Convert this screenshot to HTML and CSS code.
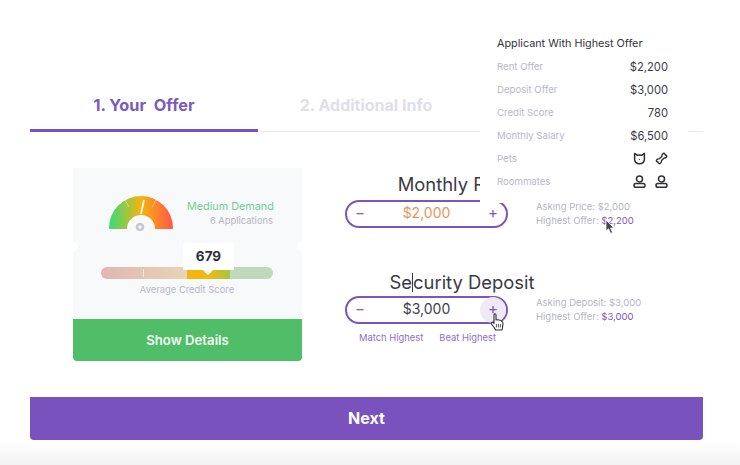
FILE: index.html
```html
<!DOCTYPE html>
<html lang="en">
<head>
  <meta charset="UTF-8" />
  <title>Your Offer</title>
  <link rel="stylesheet" href="styles.css">
</head>
<body>
  <div class="page">
    <div class="tabs">
      <div class="tab active">1. Your&nbsp; Offer</div>
      <div class="tab">2. Additional Info</div>
    </div>

    <div class="content">
      <div class="card">
        <div class="card-top">
          <div class="demand">
            <svg class="gauge" width="66" height="37" viewBox="0 0 66 37">
              <defs>
                <linearGradient id="gaugeFill" x1="0" y1="0" x2="1" y2="0">
                  <stop offset="0" stop-color="#35dc7c" />
                  <stop offset="0.5" stop-color="#f5b40f" />
                  <stop offset="1" stop-color="#ff5746" />
                </linearGradient>
              </defs>
              <path d="M1 34 A32 32 0 0 1 65 34 Q65 35 64 35 L47 35 A14 14 0 0 0 19 35 L2 35 Q1 35 1 34 Z" fill="url(#gaugeFill)" />
              <path d="M17 6 L21 13 M48 6 L44 13" stroke="#fff" stroke-opacity="0.45" stroke-width="1" />
              <path d="M33 20 L36 6" stroke="#fff" stroke-width="1.6" />
              <circle cx="32" cy="33" r="3" fill="none" stroke="#c6c6cc" stroke-width="2.6" />
            </svg>
            <div class="demand-text">
              <div class="demand-level">Medium Demand</div>
              <div class="demand-count">6 Applications</div>
            </div>
          </div>
          <div class="score">
            <div class="score-tip">679</div>
            <div class="score-bar">
              <div class="seg seg-low"></div>
              <div class="seg seg-mid"></div>
              <div class="seg seg-high"></div>
            </div>
            <div class="score-label">Average Credit Score</div>
          </div>
        </div>
        <div class="card-btn">Show Details</div>
      </div>

      <div class="fields">
        <div class="field">
          <div class="field-title rent">Monthly Rent</div>
          <div class="stepper">
            <span class="step">&minus;</span>
            <span class="amount orange">$2,000</span>
            <span class="step">+</span>
          </div>
          <div class="note">
            <div>Asking Price: $2,000</div>
            <div>Highest Offer: <span class="purple">$2,200</span></div>
          </div>
        </div>

        <div class="field">
          <div class="field-title">Se<span class="caret"></span>curity Deposit</div>
          <div class="stepper">
            <span class="step">&minus;</span>
            <span class="amount">$3,000</span>
            <span class="step hover">+</span>
          </div>
          <div class="note">
            <div>Asking Deposit: $3,000</div>
            <div>Highest Offer: <span class="purple">$3,000</span></div>
          </div>
          <div class="links">
            <span>Match Highest</span>
            <span>Beat Highest</span>
          </div>
        </div>
      </div>
    </div>

    <div class="next-btn">Next</div>
  </div>

  <div class="popover">
    <div class="popover-title">Applicant With Highest Offer</div>
    <div class="row"><span class="row-label">Rent Offer</span><span class="row-value">$2,200</span></div>
    <div class="row"><span class="row-label">Deposit Offer</span><span class="row-value">$3,000</span></div>
    <div class="row"><span class="row-label">Credit Score</span><span class="row-value">780</span></div>
    <div class="row"><span class="row-label">Monthly Salary</span><span class="row-value">$6,500</span></div>
    <div class="row">
      <span class="row-label">Pets</span>
      <span class="row-icons">
        <svg width="13" height="13" viewBox="0 0 13 13" fill="none" stroke="#2f2f38" stroke-width="1.5" stroke-linejoin="round">
          <path d="M1.6 1.4 L4 3.2 Q6.5 2.7 9 3.2 L11.4 1.4 L11.4 7.4 Q11 11.6 6.5 11.8 Q2 11.6 1.6 7.4 Z" />
          <circle cx="6.5" cy="7.6" r="0.7" fill="#2f2f38" stroke="none" />
        </svg>
        <svg width="13" height="13" viewBox="0 0 13 13" fill="none" stroke="#2f2f38" stroke-width="1.4" stroke-linejoin="round">
          <path d="M4.6 6.6 L6.8 4.4 Q6.8 3 7.6 2 Q9 0.6 9.8 2 Q10 3 11 3.2 Q12.6 4 11 5.4 Q10 6.2 8.8 6.2 L6.6 8.4 Q6.6 10 5.6 11 Q4.2 12.4 3.4 11 Q3.2 10 2.2 9.8 Q0.6 9 2 7.6 Q3 6.6 4.6 6.6 Z" />
        </svg>
      </span>
    </div>
    <div class="row">
      <span class="row-label">Roommates</span>
      <span class="row-icons">
        <svg width="13" height="13" viewBox="0 0 13 13" fill="none" stroke="#2f2f38" stroke-width="1.5">
          <circle cx="6.5" cy="3.9" r="3" />
          <rect x="1" y="8.6" width="11" height="3.6" rx="1.8" />
        </svg>
        <svg width="13" height="13" viewBox="0 0 13 13" fill="none" stroke="#2f2f38" stroke-width="1.5">
          <circle cx="6.5" cy="3.9" r="3" />
          <rect x="1" y="8.6" width="11" height="3.6" rx="1.8" />
        </svg>
      </span>
    </div>
  </div>

  <!-- curseurs -->
  <svg class="cursor arrow" width="12" height="16" viewBox="0 0 12 16">
    <path d="M1 1 L1 12 L3.6 9.8 L5.6 14.4 L7.6 13.4 L5.6 9 L9 9 Z" fill="#46464c" stroke="#fff" stroke-width="0.8" />
  </svg>
  <svg class="cursor hand" width="14" height="18" viewBox="0 0 14 18">
    <path d="M4 9 L4 2 Q4 0.8 5 0.8 Q6 0.8 6 2 L6 7 Q8 6.4 9 7 Q11 7 12 8.4 Q13 9 13 11 L12.4 15 L12 17 L5.4 17 L4.6 15 L1.4 11 Q0.6 9.6 2 9.2 Q3 9 4 10.4 Z" fill="#fff" stroke="#2c2c30" stroke-width="1.1" stroke-linejoin="round" />
    <path d="M6.4 11 L6.4 14.4 M8.4 11 L8.4 14.4 M10.4 11 L10.4 14.4" stroke="#2c2c30" stroke-width="0.8" />
  </svg>
</body>
</html>
```

FILE: styles.css
```css
html {
  height: 100%;
  background: linear-gradient(to bottom, #fff 442px, #f2f2f2 465px);
}

body {
  margin: 0;
  font-family: "Inter", "Liberation Sans", sans-serif;
  color: #33333c;
  overflow: hidden;
  height: 465px;
  position: relative;
}

.page {
  width: 673px;
  padding: 93px 37px 0 30px;
}

.tabs {
  display: flex;
  border-bottom: 1px solid #e9e9ef;
  height: 38px;
}

.tab {
  width: 216px;
  height: 25px;
  line-height: 25px;
  text-align: center;
  font-size: 16px;
  font-weight: 700;
  color: #dfdfe9;
}

.tab.active {
  width: 228px;
  height: 36px;
  font-size: 16.3px;
  color: #7b59bd;
  border-bottom: 3px solid #7952bd;
}

.content {
  display: flex;
  gap: 43px;
  padding: 36px 0 0 43px;
  height: 193px;
}

.card {
  width: 229px;
  display: flex;
  flex-direction: column;
  position: relative;
  border-radius: 0 0 4px 4px;
  overflow: hidden;
}

.card::before,
.card::after {
  content: "";
  position: absolute;
  top: 74px;
  width: 10px;
  height: 10px;
  border-radius: 50%;
  background: #fff;
}

.card::before {
  left: -5px;
}

.card::after {
  right: -5px;
}

.card-top {
  flex-grow: 1;
  background: #f8f9fb;
  padding-top: 26px;
}

.demand {
  display: flex;
  align-items: flex-start;
  padding-left: 35px;
  height: 49px;
}

.demand-text {
  margin-left: 13px;
  margin-top: 6px;
  text-align: right;
  width: 86px;
}

.demand-level {
  font-size: 10.8px;
  line-height: 14px;
  color: #6fcf8e;
  white-space: nowrap;
}

.demand-count {
  font-size: 9.4px;
  line-height: 14px;
  color: #b5b5c6;
}

.score {
  position: relative;
  padding: 24px 29px 0 28px;
}

.score-tip {
  position: absolute;
  left: 110px;
  top: 0;
  width: 51px;
  height: 27px;
  line-height: 27px;
  background: #fff;
  text-align: center;
  font-size: 13.5px;
  font-weight: 700;
  color: #2f2f38;
  z-index: 1;
}

.score-tip::after {
  content: "";
  position: absolute;
  left: 20px;
  top: 27px;
  border: 5px solid transparent;
  border-top-color: #fff;
  border-bottom: 0;
}

.score-bar {
  display: flex;
  height: 12px;
  border-radius: 6px;
  overflow: hidden;
}

.seg-low {
  width: 86px;
  position: relative;
  background: linear-gradient(to right, #e2b6b2, #e6d5b4);
}

.seg-low::after {
  content: "";
  position: absolute;
  left: 42px;
  top: 2px;
  width: 1px;
  height: 8px;
  background: #f4ece4;
}

.seg-mid {
  width: 43px;
  background: linear-gradient(to right, #f4b40f, #f2b811 50%, #a0c93f);
}

.seg-high {
  width: 43px;
  background: #bfd9bb;
}

.score-label {
  margin-top: 4px;
  text-align: center;
  font-size: 9.4px;
  line-height: 13px;
  color: #b8b8c8;
}

.card-btn {
  height: 42px;
  line-height: 42px;
  text-align: center;
  background: #50bd69;
  color: #f3fbf4;
  font-size: 13.2px;
  font-weight: 600;
}

.fields {
  display: flex;
  flex-direction: column;
  gap: 36px;
  width: 234px;
}

.field {
  display: grid;
  grid-template-columns: 163px 71px;
  column-gap: 28px;
  margin-right: -28px;
}

.field-title {
  grid-column: 1 / 3;
  margin-top: 6px;
  margin-right: 28px;
  height: 26px;
  line-height: 24px;
  font-size: 18.4px;
  text-align: center;
  white-space: nowrap;
  color: #3b3b44;
}

.field-title.rent {
  margin-top: 4px;
  height: 28px;
  padding-right: 14px;
}

.caret {
  display: inline-block;
  width: 1px;
  height: 19px;
  vertical-align: -3px;
  background: #3b3b44;
}

.stepper {
  height: 28px;
  box-sizing: border-box;
  border: 2px solid #7a55bd;
  border-radius: 14px;
  display: flex;
  align-items: center;
  justify-content: space-between;
}

.step {
  width: 26px;
  height: 26px;
  line-height: 24px;
  text-align: center;
  font-size: 15px;
  color: #7b59bd;
  border-radius: 50%;
}

.step.hover {
  background: #eeeaf7;
}

.amount {
  font-size: 14px;
  line-height: 22px;
  height: 24px;
  color: #3f3f48;
}

.amount.orange {
  color: #e8955d;
}

.note {
  font-size: 9.5px;
  line-height: 14px;
  color: #b5b5c6;
  white-space: nowrap;
}

.purple {
  color: #7b59bd;
}

.links {
  grid-column: 1;
  display: flex;
  justify-content: space-between;
  padding: 7px 12px 0 14px;
  font-size: 9.4px;
  line-height: 14px;
  color: #8e70c8;
  white-space: nowrap;
}

.next-btn {
  margin-top: 36px;
  height: 43px;
  line-height: 43px;
  border-radius: 0 0 4px 4px;
  background: #7952bd;
  color: #fff;
  text-align: center;
  font-size: 16px;
  font-weight: 700;
}

.popover {
  position: absolute;
  left: 480px;
  top: 25px;
  width: 171px;
  height: 178px;
  padding: 0 20px 0 17px;
  background: #fff;
}

.popover-title {
  margin-top: 12px;
  height: 18px;
  line-height: 14px;
  font-size: 10.8px;
  color: #33333c;
  white-space: nowrap;
}

.row {
  display: flex;
  justify-content: space-between;
  align-items: center;
  height: 23px;
}

.row-label {
  font-size: 9.6px;
  color: #b8b8c8;
}

.row-value {
  font-size: 11.2px;
  color: #3a3a42;
}

.row-icons {
  display: flex;
  gap: 9px;
}

.cursor {
  position: absolute;
}

.arrow {
  left: 605px;
  top: 219px;
}

.hand {
  left: 490px;
  top: 313px;
}
```
